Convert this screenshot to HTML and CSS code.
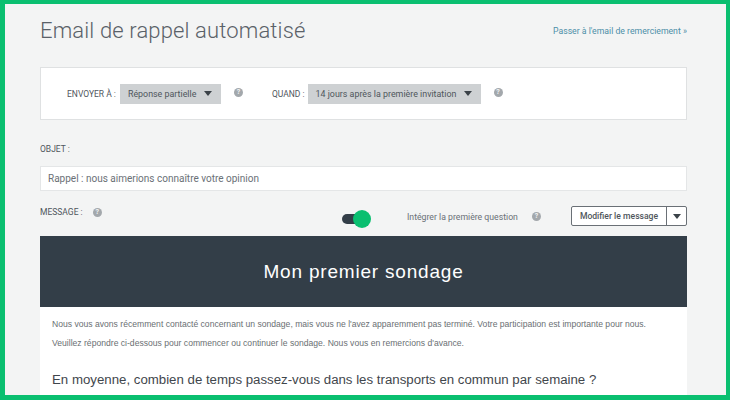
FILE: index.html
```html
<!DOCTYPE html>
<html lang="fr">
<head>
  <meta charset="UTF-8" />
  <title>Email de rappel automatisé</title>
  <link rel="stylesheet" href="styles.css">
</head>
<body>
  <div class="frame">
    <div class="page">

      <div class="page-head">
        <h1>Email de rappel automatisé</h1>
        <a href="#" class="skip-link">Passer à l'email de remerciement »</a>
      </div>

      <!-- Envoyer / quand -->
      <div class="settings">
        <span class="label send-label">ENVOYER À :</span>
        <div class="select select-send">Réponse partielle <span class="caret"></span></div>
        <span class="help help-send">?</span>
        <span class="label when-label">QUAND :</span>
        <div class="select select-when">14 jours après la première invitation <span class="caret"></span></div>
        <span class="help help-when">?</span>
      </div>

      <div class="label subject-label">OBJET :</div>
      <div class="subject-input">Rappel : nous aimerions connaître votre opinion</div>

      <div class="message-bar">
        <div class="message-label">
          <span class="label">MESSAGE :</span>
          <span class="help">?</span>
        </div>
        <div class="toggle"><span class="toggle-knob"></span></div>
        <span class="toggle-text">Intégrer la première question</span>
        <span class="help help-toggle">?</span>
        <div class="split-btn">
          <button class="split-main">Modifier le message</button>
          <button class="split-arrow"><span class="caret"></span></button>
        </div>
      </div>

      <!-- Apercu du message -->
      <div class="preview">
        <div class="preview-banner">Mon premier sondage</div>
        <div class="preview-body">
          <p>Nous vous avons récemment contacté concernant un sondage, mais vous ne l'avez apparemment pas terminé. Votre participation est importante pour nous.</p>
          <p>Veuillez répondre ci-dessous pour commencer ou continuer le sondage. Nous vous en remercions d'avance.</p>
          <h3>En moyenne, combien de temps passez-vous dans les transports en commun par semaine ?</h3>
        </div>
      </div>

    </div>
  </div>
</body>
</html>
```

FILE: styles.css
```css
* {
  box-sizing: border-box;
}

html,
body {
  margin: 0;
  padding: 0;
}

body {
  font-family: 'Roboto', 'Lato', sans-serif;
  color: #333e48;
}

.frame {
  width: 730px;
  height: 400px;
  overflow: hidden;
  border-style: solid;
  border-color: #0abf70;
  border-width: 4px 4px 5px 5px;
  background-color: #f3f4f4;
}

.page {
  width: 647px;
  margin-left: 35px;
  height: 391px;
  overflow: hidden;
}

.page-head {
  display: flex;
  justify-content: space-between;
  height: 63px;
}

h1 {
  margin: 13px 0 0;
  font-size: 22px;
  line-height: 28px;
  font-weight: 300;
  letter-spacing: 0.14px;
  color: #5a6168;
}

.skip-link {
  margin-top: 21px;
  font-size: 8.7px;
  line-height: 12px;
  color: #4d8fa8;
  text-decoration: none;
}

.label {
  font-size: 8.5px;
  line-height: 12px;
  color: #4f565c;
  white-space: nowrap;
}

.settings {
  display: flex;
  align-items: center;
  height: 53px;
  padding-left: 26px;
  background-color: #fff;
  border: 1px solid #dfe1e2;
}

.select {
  display: flex;
  align-items: center;
  justify-content: space-between;
  height: 20px;
  padding: 0 9px 0 8px;
  font-size: 8.9px;
  color: #4f565c;
  white-space: nowrap;
  background-color: #ced1d3;
}

.select-send {
  width: 101px;
  margin-left: 4px;
}

.select-when {
  width: 173px;
  margin-left: 3px;
}

.caret {
  width: 0;
  height: 0;
  border-left: 4.5px solid transparent;
  border-right: 4.5px solid transparent;
  border-top: 5px solid #3b4248;
}

.help {
  display: flex;
  align-items: center;
  justify-content: center;
  width: 9px;
  height: 9px;
  border-radius: 50%;
  background-color: #a3a8ac;
  color: #f3f4f4;
  font-size: 7px;
  font-weight: 700;
  line-height: 9px;
}

.help-send {
  margin: -2px 0 0 13px;
}

.when-label {
  margin-left: 29px;
}

.help-when {
  margin: -2px 0 0 13px;
}

.subject-label {
  margin-top: 23px;
}

.subject-input {
  height: 25px;
  margin-top: 11px;
  padding-left: 7px;
  font-size: 10px;
  line-height: 23px;
  color: #6a7076;
  background-color: #fff;
  border: 1px solid #e4e6e7;
}

.message-bar {
  display: flex;
  height: 45px;
  padding-top: 15px;
}

.message-label {
  display: flex;
  gap: 10px;
  width: 302px;
}

.message-label .help {
  margin-top: 2px;
}

.toggle {
  position: relative;
  width: 22px;
  height: 10px;
  margin-top: 8px;
  border-radius: 5px;
  background-color: #333e48;
}

.toggle-knob {
  position: absolute;
  top: -4px;
  left: 11px;
  width: 18px;
  height: 18px;
  border-radius: 50%;
  background-color: #0abf70;
}

.toggle-text {
  margin: 5px 0 0 43px;
  font-size: 8.7px;
  line-height: 12px;
  color: #6a7076;
}

.help-toggle {
  margin: 6px 0 0 14px;
}

.split-btn {
  display: flex;
  height: 20px;
  margin-left: auto;
  background-color: #fff;
  border: 1px solid #6a7076;
  border-radius: 2px;
}

.split-main,
.split-arrow {
  padding: 0;
  border: none;
  background: none;
  font-family: inherit;
}

.split-main {
  width: 95px;
  font-size: 8.6px;
  font-weight: 500;
  color: #4f565c;
  border-right: 1px solid #6a7076;
}

.split-arrow {
  display: flex;
  align-items: center;
  justify-content: center;
  width: 19px;
}

.preview {
  background-color: #fff;
}

.preview-banner {
  height: 71px;
  background-color: #333e48;
  color: #fff;
  font-family: 'Liberation Sans', sans-serif;
  font-size: 19px;
  line-height: 72px;
  text-align: center;
  letter-spacing: 0.8px;
}

.preview-body {
  min-height: 100px;
  padding: 11px 12px 0;
  font-family: 'Liberation Sans', sans-serif;
}

.preview-body p {
  margin: 0 0 7px;
  font-size: 8.6px;
  line-height: 12px;
  color: #6a6f73;
}

.preview-body h3 {
  margin: 22px 0 0;
  font-size: 13.25px;
  line-height: 18px;
  font-weight: 400;
  white-space: nowrap;
  color: #3f464c;
}
```
